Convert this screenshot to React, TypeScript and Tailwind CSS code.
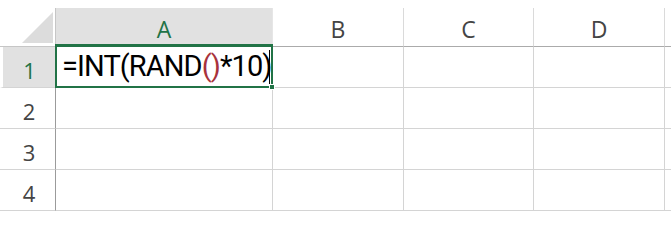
import React from "react";

const hdrFont = { fontFamily: '"Open Sans", "Noto Sans", sans-serif' };

const cols = [
  { id: "A", w: "w-[217px]", active: true },
  { id: "B", w: "w-[131px]", active: false },
  { id: "C", w: "w-[130px]", active: false },
  { id: "D", w: "w-[131px]", active: false },
];

const rows = [1, 2, 3, 4];

const App = () => {
  return (
    <div className="relative h-[217px] w-[671px] overflow-hidden bg-white">
      <div className="h-2" />

      {/* column headers */}
      <div className="flex h-[39px]" style={hdrFont}>
        <div className="relative w-[56px] shrink-0 border-b border-r border-[#c6c6c6] bg-white">
          <svg className="absolute left-[22px] top-[4px]" width="31" height="31" viewBox="0 0 31 31">
            <polygon points="31,0 31,31 0,31" fill="#dcdcdc" />
          </svg>
        </div>
        {cols.map((c) => (
          <div
            key={c.id}
            className={
              c.active
                ? `${c.w} shrink-0 flex items-end justify-center border-b-2 border-r border-b-[#217346] border-r-[#e6e6e6] bg-[#e1e1e1] pb-[4px] text-[23px] leading-none text-[#217346]`
                : `${c.w} shrink-0 flex items-end justify-center border-b border-r border-b-[#ababab] border-r-[#dadada] bg-white pb-[5px] text-[23px] leading-none text-[#444444]`
            }
          >
            {c.id}
          </div>
        ))}
        <div className="flex-1 border-b border-[#ababab] bg-white" />
      </div>

      {/* rows */}
      {rows.map((r) => (
        <div key={r} className="flex h-[41px]">
          <div
            style={hdrFont}
            className={
              r === 1
                ? "w-[56px] shrink-0 flex items-end justify-center border-b border-l-[3px] border-r border-b-[#d4d4d4] border-l-white border-r-[#9b9b9b] bg-[#e1e1e1] pb-[6px] pl-[1px] text-[22px] leading-none text-[#217346]"
                : "w-[56px] shrink-0 flex items-end justify-center border-b border-r border-b-[#d4d4d4] border-r-[#9b9b9b] bg-white pb-[6px] pl-[3px] text-[22px] leading-none text-[#444444]"
            }
          >
            {r}
          </div>
          {cols.map((c) => (
            <div key={c.id} className={`${c.w} shrink-0 border-b border-r border-[#d4d4d4]`} />
          ))}
          <div className="flex-1 border-b border-[#d4d4d4]" />
        </div>
      ))}

      {/* active cell A1 */}
      <div className="absolute left-[55px] top-[44px] h-[44px] w-[218px] border-2 border-[#217346]">
        <div
          className="absolute bottom-[5px] left-[5px] whitespace-nowrap text-[29px] leading-none tracking-[-0.9px] text-black"
          style={{ fontFamily: 'Roboto, "Liberation Sans", sans-serif' }}
        >
          =INT(RAND<span className="text-[#a8323c]">()</span>*10)
        </div>
        <div className="absolute right-[1px] top-[4px] h-[35px] w-px bg-black" />
        <div className="absolute -bottom-[4px] -right-[4px] h-[6px] w-[6px] border border-white bg-[#217346]" />
      </div>
    </div>
  );
};

export default App;
